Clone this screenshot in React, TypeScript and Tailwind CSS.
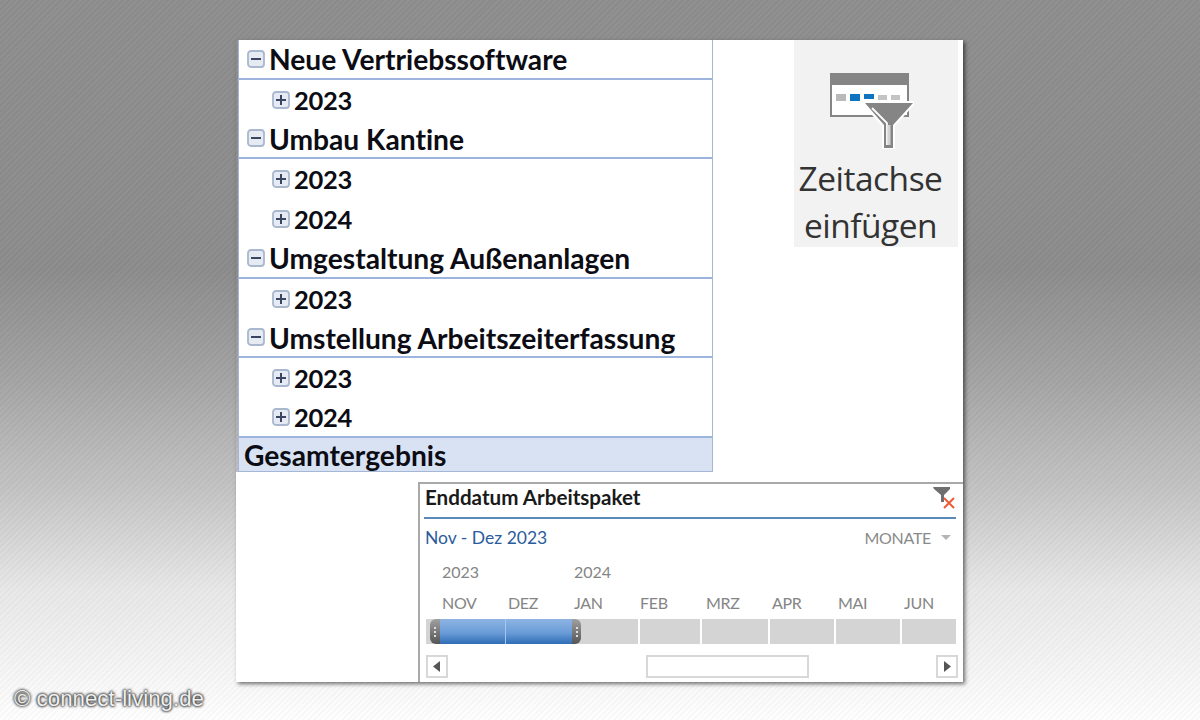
import React from "react";

function Tree({ minus }: { minus?: boolean }) {
  return (
    <svg width="18" height="18" viewBox="0 0 18 18" className="shrink-0">
      <rect x="1" y="1" width="16" height="16" rx="3" fill="#e6ebf3" stroke="#a9b7cf" strokeWidth="1.8" />
      <rect x="4" y="8" width="10" height="2" fill="#3a4564" />
      {!minus && <rect x="8" y="4" width="2" height="10" fill="#3a4564" />}
    </svg>
  );
}

function Head({ label }: { label: string }) {
  return (
    <div className="h-[39.8px] shrink-0 flex items-center pl-[8px] gap-[4px] border-b-2 border-[#9db5de] text-[28.2px] font-bold text-[#0c0c14] [font-variant-ligatures:none]">
      <Tree minus />
      <span className="mt-[1px]">{label}</span>
    </div>
  );
}

function Sub({ label, last }: { label: string; last?: boolean }) {
  return (
    <div className={last ? "h-[39.8px] shrink-0 flex items-center pl-[33px] gap-[4px] border-b-2 border-[#9db5de] text-[25.5px] font-bold text-[#0c0c14]" : "h-[39.8px] shrink-0 flex items-center pl-[33px] gap-[4px] text-[25.5px] font-bold text-[#0c0c14]"}>
      <Tree />
      <span className="tracking-[-0.3px]">{label}</span>
    </div>
  );
}

function RibbonIcon() {
  return (
    <svg width="84" height="76" viewBox="0 0 84 76" className="shrink-0 ml-[2px]">
      <rect x="1" y="1" width="77" height="42" fill="#fff" stroke="#858585" strokeWidth="2" />
      <rect x="0" y="0" width="79" height="12" fill="#858585" />
      <rect x="6" y="21" width="10" height="7" fill="#b9b9b9" />
      <rect x="20" y="21" width="10" height="7" fill="#0e74bf" />
      <rect x="34" y="21" width="10" height="5" fill="#0e74bf" />
      <rect x="48" y="22" width="9" height="5" fill="#c4c4c4" />
      <rect x="61" y="22" width="9" height="5" fill="#c4c4c4" />
      <path d="M32 28 H84 V32 L65 53 V76 H52 V53 L33 32 Z" fill="#fff" />
      <path d="M35 30 H83 L63 52 V75 H54 V52 Z" fill="#858585" />
      <path d="M42 35 L57 50 V72" fill="none" stroke="#ffffff" strokeWidth="1.8" />
      <rect x="57.5" y="52" width="3" height="20" fill="#d4d4d4" />
    </svg>
  );
}

const months = ["NOV", "DEZ", "JAN", "FEB", "MRZ", "APR", "MAI", "JUN"];
const cellWidths = ["w-[78px]", "w-[66px]", "w-[64px]", "w-[60px]", "w-[66px]", "w-[64px]", "w-[64px]", "w-[54px]"];

function Dots() {
  return (
    <>
      <i className="w-[2px] h-[2px] bg-[#ddd]" />
      <i className="w-[2px] h-[2px] bg-[#ddd]" />
      <i className="w-[2px] h-[2px] bg-[#ddd]" />
    </>
  );
}

function Timeline() {
  return (
    <div className="ml-[182px] mt-[10px] h-[200px] border-l-2 border-t-2 border-[#a9a9a9] pl-[6px] pr-[6px] flex flex-col font-['Lato',sans-serif] [font-variant-ligatures:none]">
      <div className="h-[33px] flex items-center justify-between">
        <span className="text-[20.6px] font-bold text-[#1a1a1a] -mt-[7px] -ml-[1px] whitespace-nowrap">Enddatum Arbeitspaket</span>
        <svg width="24" height="24" viewBox="0 0 24 24" className="mr-[1px] -mt-[8px]">
          <path d="M1 2 H18 V4 L12 10 V17 H9 V10 L2 4 Z" fill="#6f6f6f" />
          <path d="M12 13 L22 23 M22 13 L12 23" stroke="#ee5a35" strokeWidth="2" />
        </svg>
      </div>
      <div className="h-[2px] bg-[#5a88b8] -ml-[2px] mr-[1px]" />
      <div className="h-[38px] flex items-center justify-between pr-[6px]">
        <span className="text-[17.5px] text-[#2b5c9c] -ml-[1px]">Nov - Dez 2023</span>
        <span className="flex items-center gap-[10px] text-[16px] text-[#8a8a8a] tracking-[-0.3px]">
          MONATE
          <svg width="10" height="6" viewBox="0 0 10 6"><path d="M0 0 H10 L5 5 Z" fill="#b5b5b5" /></svg>
        </span>
      </div>
      <div className="h-[31px] flex items-center text-[16px] text-[#858585] -mt-[1px]">
        <span className="ml-[16px] w-[132px]">2023</span>
        <span>2024</span>
      </div>
      <div className="h-[31px] flex items-center text-[16px] text-[#858585] tracking-[-0.3px]">
        {months.map((m) => (
          <span key={m} className="w-[66px] pl-[16px] shrink-0">{m}</span>
        ))}
      </div>
      <div className="relative h-[25px] flex gap-[2px] mt-[1px]">
        {cellWidths.map((w, i) => (
          <div key={i} className={w + " bg-[#d4d4d4]"} />
        ))}
        <div className="absolute left-[4px] top-0 bottom-0 flex">
          <div className="w-[10px] rounded-l-[6px] bg-[linear-gradient(#a0a0a0,#555)] flex flex-col items-center justify-center gap-[2px]">
            <Dots />
          </div>
          <div className="w-[65px] bg-[linear-gradient(#8eb4e3,#6a9cd8_55%,#2f6db5)]" />
          <div className="w-[1px] bg-[#a9c5ea]" />
          <div className="w-[66px] bg-[linear-gradient(#8eb4e3,#6a9cd8_55%,#2f6db5)]" />
          <div className="w-[9px] rounded-r-[6px] bg-[linear-gradient(#a0a0a0,#555)] flex flex-col items-center justify-center gap-[2px]">
            <Dots />
          </div>
        </div>
      </div>
      <div className="flex items-center mt-[11px] mr-[-1px]">
        <div className="w-[22px] h-[23px] border-2 border-[#d8d8d8] flex items-center justify-center">
          <svg width="8" height="11" viewBox="0 0 8 11"><path d="M7 0 V11 L0 5.5 Z" fill="#555" /></svg>
        </div>
        <div className="w-[163px] h-[23px] border-2 border-[#d8d8d8] ml-[198px]" />
        <div className="w-[22px] h-[23px] border-2 border-[#d8d8d8] ml-auto flex items-center justify-center">
          <svg width="8" height="11" viewBox="0 0 8 11"><path d="M1 0 V11 L8 5.5 Z" fill="#555" /></svg>
        </div>
      </div>
    </div>
  );
}

export default function App() {
  return (
    <div className="relative w-[1200px] h-[720px] overflow-hidden pt-[40px] pl-[236px] font-['Lato',sans-serif] bg-[repeating-linear-gradient(135deg,rgba(255,255,255,0.025)_0_2px,rgba(0,0,0,0.025)_2px_4px),linear-gradient(#8e8e8e_0,#8c8c8c_270px,#a4a4a4_380px,#c4c4c4_490px,#e8e8e8_590px,#f4f4f4_660px,#ffffff_720px)]">
      <div className="w-[727px] h-[642px] shadow-[2px_2px_4px_rgba(0,0,0,0.55)] flex flex-col">
        <div className="flex h-[432px] ml-[2px] bg-white">
          <div className="w-[475px] h-[432px] border-x border-b border-[#a5b6d6] overflow-hidden flex flex-col">
            <Head label="Neue Vertriebssoftware" />
            <Sub label="2023" />
            <Head label="Umbau Kantine" />
            <Sub label="2023" />
            <Sub label="2024" />
            <Head label="Umgestaltung Außenanlagen" />
            <Sub label="2023" />
            <Head label="Umstellung Arbeitszeiterfassung" />
            <Sub label="2023" />
            <Sub label="2024" last />
            <div className="flex-1 min-h-0 bg-[#d9e2f3] pl-[5px] flex items-center text-[28.2px] leading-[30px] font-bold text-[#0c0c14] [font-variant-ligatures:none]">
              <span className="mt-[2px]">Gesamtergebnis</span>
            </div>
          </div>
          <div className="ml-[81px] w-[164px] h-[207px] bg-[#f2f2f2] flex flex-col items-center pt-[33px] pr-[11px]">
            <RibbonIcon />
            <div className="shrink-0 text-[33.5px] leading-[47px] text-[#333] text-center mt-[6px] font-['Open_Sans',sans-serif] tracking-[-0.5px] font-normal whitespace-nowrap">
              Zeitachse<br />einfügen
            </div>
          </div>
        </div>
        <div className="flex-1 bg-white flex flex-col">
          <Timeline />
        </div>
      </div>
      <div className="absolute left-[14px] top-[686px] text-[22.3px] text-[#f0f0f0] font-['Liberation_Sans',sans-serif] [text-shadow:0_0_3px_#333,0_0_3px_#333,0_0_2px_#555] leading-[26px]">
        © connect-living.de
      </div>
    </div>
  );
}
